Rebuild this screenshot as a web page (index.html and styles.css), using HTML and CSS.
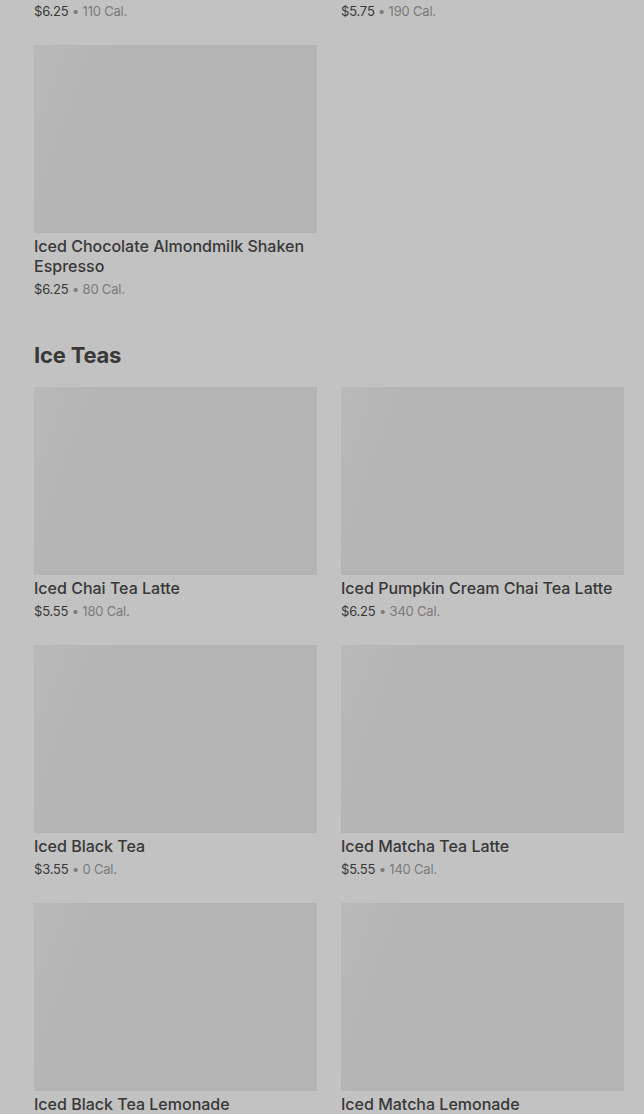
FILE: index.html
```html
<!DOCTYPE html>
<html lang="en">
<head>
    <meta charset="UTF-8">
    <title>Menu</title>
    <link rel="stylesheet" href="styles.css">
</head>
<body>

<div class="menu">
    <!-- Shaken espresso (scrolled partly out of view) -->
    <section class="section section-scrolled">
        <div class="grid">
            <div class="item">
                <div class="thumb"></div>
                <div class="name">Iced Toasted Vanilla Oatmilk Shaken Espresso</div>
                <div class="meta"><span class="price">$6.25</span> • 110 Cal.</div>
            </div>
            <div class="item">
                <div class="thumb"></div>
                <div class="name">Iced Brown Sugar Oatmilk Shaken Espresso</div>
                <div class="meta"><span class="price">$5.75</span> • 190 Cal.</div>
            </div>
            <div class="item">
                <div class="thumb"></div>
                <div class="name">Iced Chocolate Almondmilk Shaken Espresso</div>
                <div class="meta"><span class="price">$6.25</span> • 80 Cal.</div>
            </div>
        </div>
    </section>

    <section class="section">
        <h2>Ice Teas</h2>
        <div class="grid">
            <div class="item">
                <div class="thumb"></div>
                <div class="name">Iced Chai Tea Latte</div>
                <div class="meta"><span class="price">$5.55</span> • 180 Cal.</div>
            </div>
            <div class="item">
                <div class="thumb"></div>
                <div class="name">Iced Pumpkin Cream Chai Tea Latte</div>
                <div class="meta"><span class="price">$6.25</span> • 340 Cal.</div>
            </div>
            <div class="item">
                <div class="thumb"></div>
                <div class="name">Iced Black Tea</div>
                <div class="meta"><span class="price">$3.55</span> • 0 Cal.</div>
            </div>
            <div class="item">
                <div class="thumb"></div>
                <div class="name">Iced Matcha Tea Latte</div>
                <div class="meta"><span class="price">$5.55</span> • 140 Cal.</div>
            </div>
            <div class="item">
                <div class="thumb"></div>
                <div class="name">Iced Black Tea Lemonade</div>
                <div class="meta"><span class="price">$4.25</span> • 70 Cal.</div>
            </div>
            <div class="item">
                <div class="thumb"></div>
                <div class="name">Iced Matcha Lemonade</div>
                <div class="meta"><span class="price">$5.25</span> • 130 Cal.</div>
            </div>
        </div>
    </section>
</div>

</body>
</html>
```

FILE: styles.css
```css
body {
    margin: 0;
    padding: 0;
    background-color: #c2c2c2;
    font-family: Inter, "Noto Sans", sans-serif;
    color: #383838;
    overflow: hidden;
}
.menu {
    padding: 0 20px 0 34px;
}
.section-scrolled {
    margin-top: -233px;
}
.section h2 {
    margin: 41px 0 17px;
    font-size: 22px;
    line-height: 30px;
    font-weight: 700;
    letter-spacing: -0.2px;
    color: #383838;
}
.grid {
    display: grid;
    grid-template-columns: 1fr 1fr;
    column-gap: 24px;
    row-gap: 24px;
    align-items: start;
}
.thumb {
    height: 188px;
    background-color: #b4b4b4;
    background-image: linear-gradient(110deg, #b9b9b9 0%, #b4b4b4 22%, #b4b4b4 100%);
}
.name {
    margin-top: 3px;
    font-size: 16px;
    line-height: 20px;
    font-weight: 500;
}
.meta {
    margin-top: 3px;
    font-size: 13px;
    line-height: 20px;
    letter-spacing: -0.2px;
    color: #7b7b7b;
}
.price {
    color: #383838;
}
```
